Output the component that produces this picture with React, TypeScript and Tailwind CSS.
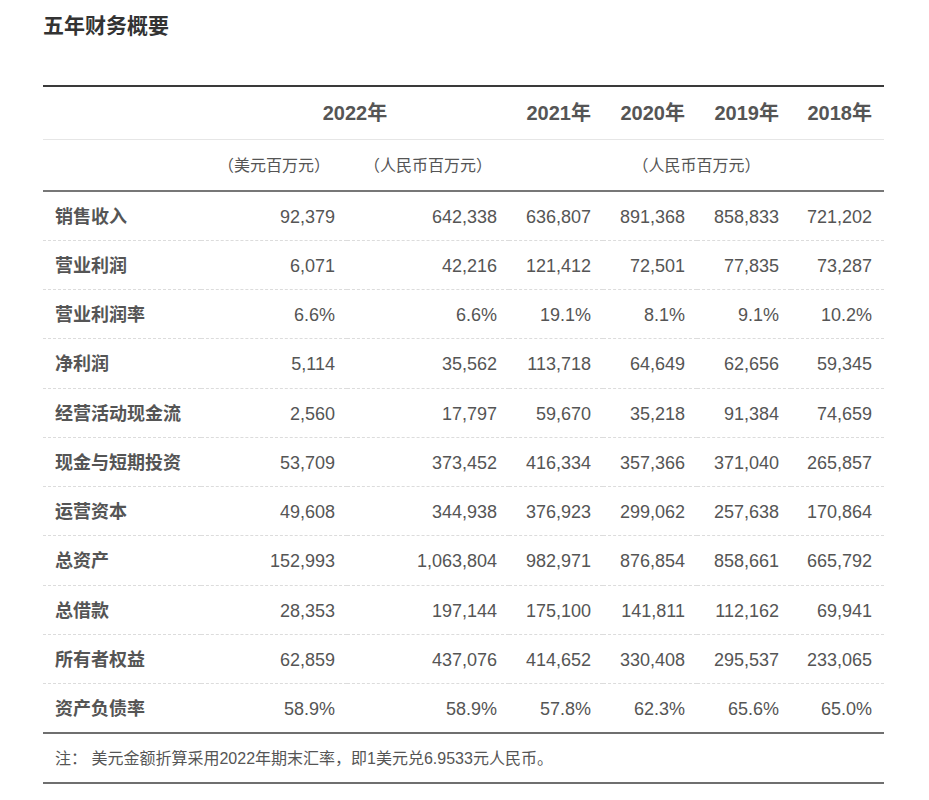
import React from "react";

const rows: [string, string[]][] = [
  ["销售收入", ["92,379", "642,338", "636,807", "891,368", "858,833", "721,202"]],
  ["营业利润", ["6,071", "42,216", "121,412", "72,501", "77,835", "73,287"]],
  ["营业利润率", ["6.6%", "6.6%", "19.1%", "8.1%", "9.1%", "10.2%"]],
  ["净利润", ["5,114", "35,562", "113,718", "64,649", "62,656", "59,345"]],
  ["经营活动现金流", ["2,560", "17,797", "59,670", "35,218", "91,384", "74,659"]],
  ["现金与短期投资", ["53,709", "373,452", "416,334", "357,366", "371,040", "265,857"]],
  ["运营资本", ["49,608", "344,938", "376,923", "299,062", "257,638", "170,864"]],
  ["总资产", ["152,993", "1,063,804", "982,971", "876,854", "858,661", "665,792"]],
  ["总借款", ["28,353", "197,144", "175,100", "141,811", "112,162", "69,941"]],
  ["所有者权益", ["62,859", "437,076", "414,652", "330,408", "295,537", "233,065"]],
  ["资产负债率", ["58.9%", "58.9%", "57.8%", "62.3%", "65.6%", "65.0%"]],
];

export default function App() {
  return (
    <div
      className="min-h-[800px] bg-white pl-[43px] pt-[11px] text-[#555]"
      style={{ fontFamily: '"Liberation Sans", "Noto Sans CJK SC", sans-serif' }}
    >
      <h1 className="text-[21px] leading-[30px] font-bold text-[#333]">五年财务概要</h1>
      <table className="mt-[44px] w-[841px] table-fixed border-collapse">
        <colgroup>
          <col className="w-[158px]" />
          <col className="w-[146px]" />
          <col className="w-[162px]" />
          <col className="w-[94px]" />
          <col className="w-[94px]" />
          <col className="w-[94px]" />
          <col className="w-[93px]" />
        </colgroup>
        <thead>
          <tr className="h-[53px] border-t-2 border-b border-t-[#3a3a3a] border-b-[#e6e6e6]">
            <th></th>
            <th colSpan={2} className="text-center text-[20px] font-bold">2022年</th>
            <th className="pr-[12px] text-right text-[20px] font-bold">2021年</th>
            <th className="pr-[12px] text-right text-[20px] font-bold">2020年</th>
            <th className="pr-[12px] text-right text-[20px] font-bold">2019年</th>
            <th className="pr-[12px] text-right text-[20px] font-bold">2018年</th>
          </tr>
          <tr className="h-[52px] border-b-2 border-b-[#777]">
            <th></th>
            <th className="pt-[3px] text-center text-[16px] font-normal">（美元百万元）</th>
            <th className="pt-[3px] text-center text-[16px] font-normal">（人民币百万元）</th>
            <th colSpan={4} className="pt-[3px] text-center text-[16px] font-normal">（人民币百万元）</th>
          </tr>
        </thead>
        <tbody>
          {rows.map(([label, vals], i) => (
            <tr
              key={label}
              className={
                i < rows.length - 1
                  ? "h-[49.25px] border-b border-dashed border-b-[#dcdcdc]"
                  : "h-[49.25px] border-b-2 border-b-[#6f6f6f]"
              }
            >
              <td className="pl-[12px] pt-[3px] text-[18px] font-bold whitespace-nowrap">{label}</td>
              {vals.map((v, j) => (
                <td key={j} className="pr-[12px] pt-[3px] text-right text-[18px] whitespace-nowrap">
                  {v}
                </td>
              ))}
            </tr>
          ))}
        </tbody>
        <tfoot>
          <tr className="h-[50px] border-b-2 border-b-[#6f6f6f]">
            <td colSpan={7} className="pl-[12px] pt-[3px] text-[16px]">
              注： 美元金额折算采用2022年期末汇率，即1美元兑6.9533元人民币。
            </td>
          </tr>
        </tfoot>
      </table>
    </div>
  );
}
